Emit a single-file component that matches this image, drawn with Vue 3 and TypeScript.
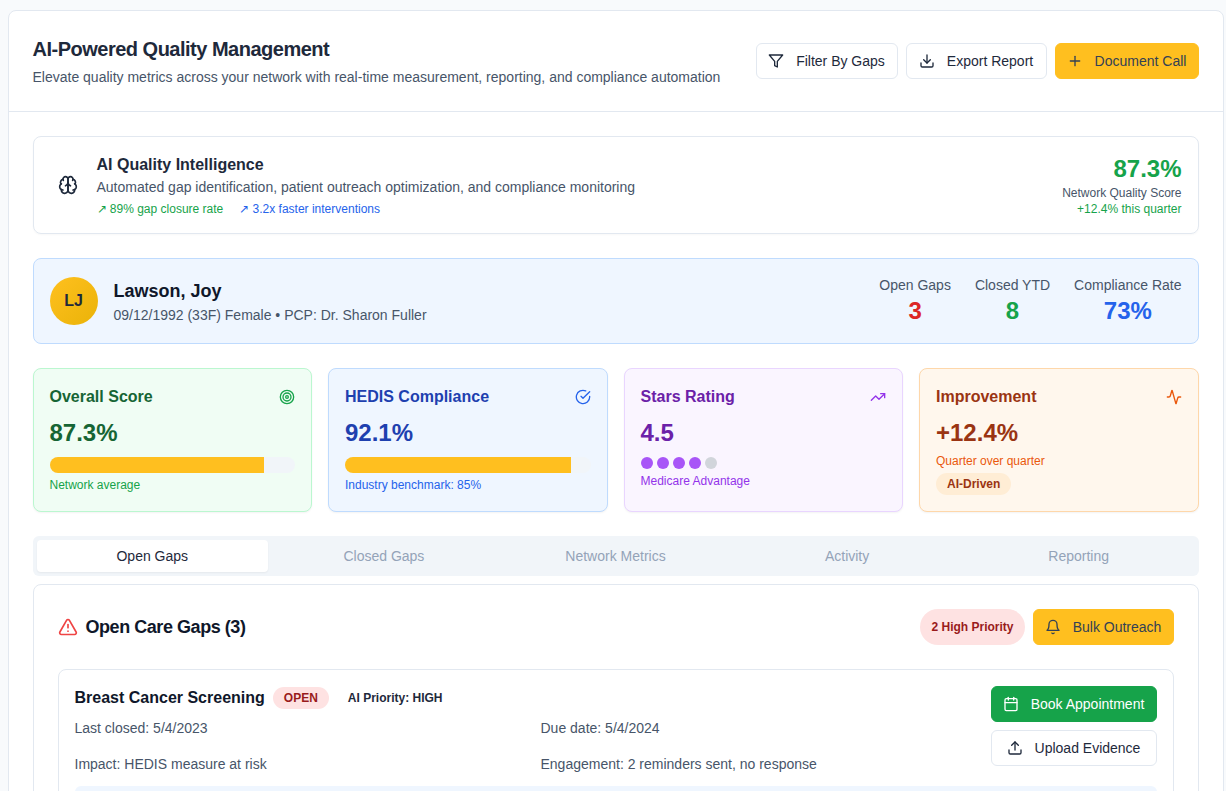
<script setup lang="ts">
const tabs = ['Open Gaps', 'Closed Gaps', 'Network Metrics', 'Activity', 'Reporting']
const stats = [
  { label: 'Open Gaps', value: '3', cls: 'red' },
  { label: 'Closed YTD', value: '8', cls: 'green' },
  { label: 'Compliance Rate', value: '73%', cls: 'blue' },
]
</script>

<template>
  <div class="page">
    <div class="shell">
      <header class="top">
        <div>
          <h1>AI-Powered Quality Management</h1>
          <p>Elevate quality metrics across your network with real-time measurement, reporting, and compliance automation</p>
        </div>
        <div class="actions">
          <button class="btn w-filter">
            <svg class="ico" viewBox="0 0 24 24"><polygon points="22 3 2 3 10 12.46 10 19 14 21 14 12.46 22 3" /></svg>
            Filter By Gaps
          </button>
          <button class="btn w-export">
            <svg class="ico" viewBox="0 0 24 24"><path d="M21 15v4a2 2 0 0 1-2 2H5a2 2 0 0 1-2-2v-4" /><polyline points="7 10 12 15 17 10" /><line x1="12" y1="15" x2="12" y2="3" /></svg>
            Export Report
          </button>
          <button class="btn yellow w-doc">
            <svg class="ico" viewBox="0 0 24 24"><path d="M5 12h14" /><path d="M12 5v14" /></svg>
            Document Call
          </button>
        </div>
      </header>

      <main class="body">
        <section class="intel">
          <svg class="ico brain" viewBox="0 0 24 24">
            <path d="M12 5a3 3 0 1 0-5.997.125 4 4 0 0 0-2.526 5.77 4 4 0 0 0 .556 6.588A4 4 0 1 0 12 18Z" />
            <path d="M12 5a3 3 0 1 1 5.997.125 4 4 0 0 1 2.526 5.77 4 4 0 0 1-.556 6.588A4 4 0 1 1 12 18Z" />
            <path d="M15 13a4.5 4.5 0 0 1-3-4 4.5 4.5 0 0 1-3 4" />
            <path d="M17.599 6.5a3 3 0 0 0 .399-1.375" />
            <path d="M6.003 5.125A3 3 0 0 0 6.401 6.5" />
            <path d="M3.477 10.896a4 4 0 0 1 .585-.396" />
            <path d="M19.938 10.5a4 4 0 0 1 .585.396" />
            <path d="M6 18a4 4 0 0 1-1.967-.516" />
            <path d="M19.967 17.484A4 4 0 0 1 18 18" />
          </svg>
          <div class="intel-text">
            <h3>AI Quality Intelligence</h3>
            <p>Automated gap identification, patient outreach optimization, and compliance monitoring</p>
            <div class="intel-meta">
              <span class="green">↗ 89% gap closure rate</span>
              <span class="blue">↗ 3.2x faster interventions</span>
            </div>
          </div>
          <div class="intel-score">
            <strong>87.3%</strong>
            <span>Network Quality Score</span>
            <em>+12.4% this quarter</em>
          </div>
        </section>

        <section class="patient">
          <div class="avatar">LJ</div>
          <div class="who">
            <h2>Lawson, Joy</h2>
            <p>09/12/1992 (33F) Female • PCP: Dr. Sharon Fuller</p>
          </div>
          <div class="stats">
            <div v-for="s in stats" :key="s.label" class="stat">
              <span>{{ s.label }}</span>
              <strong :class="s.cls">{{ s.value }}</strong>
            </div>
          </div>
        </section>

        <section class="metrics">
          <div class="metric m-green">
            <div class="m-head">
              <h4>Overall Score</h4>
              <svg class="ico m-ico" viewBox="0 0 24 24"><circle cx="12" cy="12" r="10" /><circle cx="12" cy="12" r="6" /><circle cx="12" cy="12" r="2" /></svg>
            </div>
            <div class="m-value">87.3%</div>
            <div class="track"><div class="fill" style="width: 87.3%"></div></div>
            <div class="m-note">Network average</div>
          </div>
          <div class="metric m-blue">
            <div class="m-head">
              <h4>HEDIS Compliance</h4>
              <svg class="ico m-ico" viewBox="0 0 24 24"><path d="M22 11.08V12a10 10 0 1 1-5.93-9.14" /><polyline points="22 4 12 14.01 9 11.01" /></svg>
            </div>
            <div class="m-value">92.1%</div>
            <div class="track"><div class="fill" style="width: 92.1%"></div></div>
            <div class="m-note">Industry benchmark: 85%</div>
          </div>
          <div class="metric m-purple">
            <div class="m-head">
              <h4>Stars Rating</h4>
              <svg class="ico m-ico" viewBox="0 0 24 24"><polyline points="22 7 13.5 15.5 8.5 10.5 2 17" /><polyline points="16 7 22 7 22 13" /></svg>
            </div>
            <div class="m-value">4.5</div>
            <div class="dots">
              <i v-for="n in 5" :key="n" :class="{ off: n === 5 }"></i>
            </div>
            <div class="m-note">Medicare Advantage</div>
          </div>
          <div class="metric m-orange">
            <div class="m-head">
              <h4>Improvement</h4>
              <svg class="ico m-ico" viewBox="0 0 24 24"><path d="M22 12h-2.48a2 2 0 0 0-1.93 1.46l-2.35 8.36a.25.25 0 0 1-.48 0L9.24 2.18a.25.25 0 0 0-.48 0l-2.35 8.36A2 2 0 0 1 4.49 12H2" /></svg>
            </div>
            <div class="m-value">+12.4%</div>
            <div class="m-note">Quarter over quarter</div>
            <span class="chip">AI-Driven</span>
          </div>
        </section>

        <nav class="tabs">
          <div v-for="(t, i) in tabs" :key="t" class="tab" :class="{ active: i === 0 }">{{ t }}</div>
        </nav>

        <section class="gaps">
          <div class="gaps-head">
            <div class="gaps-title">
              <svg class="ico alert" viewBox="0 0 24 24"><path d="m21.73 18-8-14a2 2 0 0 0-3.48 0l-8 14A2 2 0 0 0 4 21h16a2 2 0 0 0 1.73-3" /><path d="M12 9v4" /><path d="M12 17h.01" /></svg>
              <h3>Open Care Gaps (3)</h3>
            </div>
            <div class="gaps-actions">
              <span class="pill">2 High Priority</span>
              <button class="btn yellow w-bulk">
                <svg class="ico" viewBox="0 0 24 24"><path d="M6 8a6 6 0 0 1 12 0c0 7 3 9 3 9H3s3-2 3-9" /><path d="M10.3 21a1.94 1.94 0 0 0 3.4 0" /></svg>
                Bulk Outreach
              </button>
            </div>
          </div>

          <article class="gap">
            <div class="gap-row">
              <div class="gap-info">
                <div class="gap-title">
                  <h4>Breast Cancer Screening</h4>
                  <span class="open">OPEN</span>
                  <span class="prio">AI Priority: HIGH</span>
                </div>
                <div class="gap-grid">
                  <span>Last closed: 5/4/2023</span>
                  <span>Due date: 5/4/2024</span>
                  <span>Impact: HEDIS measure at risk</span>
                  <span>Engagement: 2 reminders sent, no response</span>
                </div>
              </div>
              <div class="gap-actions">
                <button class="btn solid-green">
                  <svg class="ico" viewBox="0 0 24 24"><path d="M8 2v4" /><path d="M16 2v4" /><rect x="3" y="4" width="18" height="18" rx="2" /><path d="M3 10h18" /></svg>
                  Book Appointment
                </button>
                <button class="btn">
                  <svg class="ico" viewBox="0 0 24 24"><path d="M21 15v4a2 2 0 0 1-2 2H5a2 2 0 0 1-2-2v-4" /><polyline points="17 8 12 3 7 8" /><line x1="12" y1="3" x2="12" y2="15" /></svg>
                  Upload Evidence
                </button>
              </div>
            </div>
            <div class="insight"></div>
          </article>
        </section>
      </main>
    </div>
  </div>
</template>

<style>
body {
  overflow: hidden;
  background: #f8fafc;
}
</style>

<style scoped>
.page {
  height: 791px;
  overflow: hidden;
  padding: 10px 2.5px 0 7.5px;
  box-sizing: border-box;
  font-family: "Liberation Sans", Arial, sans-serif;
  color: #1e293b;
  font-size: 14px;
  background: #f8fafc;
}

h1, h2, h3, h4, p {
  margin: 0;
}

.shell {
  background: #fff;
  border: 1px solid #e2e8f0;
  border-radius: 8px;
}

.top {
  display: flex;
  justify-content: space-between;
  align-items: center;
  padding: 24px;
  height: 101px;
  box-sizing: border-box;
  border-bottom: 1px solid #e2e8f0;
}

h1 {
  font-size: 20px;
  line-height: 28px;
  font-weight: 700;
  letter-spacing: -0.5px;
}

.top p {
  margin-top: 4px;
  line-height: 20px;
  color: #475569;
}

.actions {
  display: flex;
  gap: 8px;
}

.btn {
  display: inline-flex;
  align-items: center;
  justify-content: center;
  gap: 12px;
  height: 36px;
  padding: 0 8px;
  box-sizing: border-box;
  background: #fff;
  border: 1px solid #e2e8f0;
  border-radius: 6px;
  font: inherit;
  color: #1e293b;
  white-space: nowrap;
}

.w-filter { width: 142px; }
.w-export { width: 141px; }
.w-doc { width: 144px; }
.w-bulk { width: 141px; }

.btn.yellow {
  background: #ffbf1f;
  border-color: #ffbf1f;
  color: #334155;
}

.btn.solid-green {
  background: #16a34a;
  border-color: #16a34a;
  color: #fff;
}

.ico {
  width: 16px;
  height: 16px;
  flex: none;
  fill: none;
  stroke: currentColor;
  stroke-width: 2;
  stroke-linecap: round;
  stroke-linejoin: round;
}

.body {
  padding: 24px;
}

.intel {
  display: flex;
  align-items: center;
  height: 98px;
  box-sizing: border-box;
  padding: 0 16px 0 24px;
  border: 1px solid #e2e8f0;
  border-radius: 8px;
  box-shadow: 0 1px 2px rgba(0, 0, 0, 0.03);
}

.brain {
  width: 20px;
  height: 20px;
  margin-right: 19px;
}

.intel-text {
  flex: 1;
}

.intel-text h3 {
  font-size: 16px;
  line-height: 24px;
  font-weight: 700;
}

.intel-text p {
  line-height: 20px;
  color: #475569;
}

.intel-meta {
  display: flex;
  gap: 16px;
  margin-top: 4px;
  font-size: 12px;
  line-height: 16px;
}

.green { color: #16a34a; }
.blue { color: #2563eb; }
.red { color: #dc2626; }

.intel-score {
  display: flex;
  flex-direction: column;
  align-items: flex-end;
  font-size: 12px;
  line-height: 16px;
  color: #475569;
}

.intel-score strong {
  font-size: 24px;
  line-height: 32px;
  color: #16a34a;
}

.intel-score em {
  font-style: normal;
  color: #16a34a;
}

.patient {
  display: flex;
  align-items: center;
  gap: 16px;
  margin-top: 24px;
  height: 86px;
  box-sizing: border-box;
  padding: 0 16px;
  background: #eff6ff;
  border: 1px solid #bfdbfe;
  border-radius: 8px;
}

.avatar {
  display: flex;
  align-items: center;
  justify-content: center;
  width: 48px;
  height: 48px;
  border-radius: 50%;
  background: linear-gradient(135deg, #ffc01f, #eab308);
  font-size: 16px;
  font-weight: 700;
  color: #1e293b;
}

.who {
  flex: 1;
}

.who h2 {
  font-size: 18px;
  line-height: 28px;
  font-weight: 700;
  color: #0f172a;
}

.who p {
  line-height: 20px;
  color: #475569;
}

.stats {
  display: flex;
  gap: 24px;
}

.stat {
  display: flex;
  flex-direction: column;
  align-items: center;
  color: #475569;
  line-height: 20px;
}

.stat strong {
  font-size: 24px;
  line-height: 32px;
}

.metrics {
  display: grid;
  grid-template-columns: repeat(4, 1fr);
  gap: 16px;
  margin-top: 24px;
}

.metric {
  height: 144px;
  box-sizing: border-box;
  padding: 16px;
  border: 1px solid;
  border-radius: 8px;
  box-shadow: 0 1px 2px rgba(0, 0, 0, 0.05);
}

.m-head {
  display: flex;
  justify-content: space-between;
  align-items: center;
  height: 24px;
}

.m-head h4 {
  font-size: 16px;
  font-weight: 700;
}

.m-value {
  margin-top: 8px;
  font-size: 24px;
  line-height: 32px;
  font-weight: 700;
}

.track {
  margin-top: 8px;
  height: 16px;
  border-radius: 999px;
  background: #f1f5f9;
  overflow: hidden;
}

.fill {
  height: 100%;
  background: #ffbf1f;
}

.m-note {
  margin-top: 4px;
  font-size: 12px;
  line-height: 16px;
}

.m-green { background: #f0fdf4; border-color: #bbf7d0; }
.m-green h4, .m-green .m-value { color: #166534; }
.m-green .m-ico, .m-green .m-note { color: #16a34a; }

.m-blue { background: #eff6ff; border-color: #bfdbfe; }
.m-blue h4, .m-blue .m-value { color: #1e40af; }
.m-blue .m-ico, .m-blue .m-note { color: #2563eb; }

.m-purple { background: #faf5ff; border-color: #e9d5ff; }
.m-purple h4, .m-purple .m-value { color: #6b21a8; }
.m-purple .m-ico, .m-purple .m-note { color: #9333ea; }

.m-orange { background: #fff7ed; border-color: #fed7aa; }
.m-orange h4, .m-orange .m-value { color: #9a3412; }
.m-orange .m-ico, .m-orange .m-note { color: #ea580c; }

.dots {
  display: flex;
  gap: 4px;
  margin-top: 8px;
  height: 12px;
}

.dots i {
  width: 12px;
  height: 12px;
  border-radius: 50%;
  background: #a855f7;
}

.dots i.off {
  background: #d1d5db;
}

.chip {
  display: inline-block;
  margin-top: 4px;
  padding: 3px 11px;
  border-radius: 999px;
  background: #ffedd5;
  color: #9a3412;
  font-size: 12px;
  line-height: 16px;
  font-weight: 700;
}

.tabs {
  display: grid;
  grid-template-columns: repeat(5, 1fr);
  height: 40px;
  box-sizing: border-box;
  margin-top: 24px;
  padding: 4px;
  background: #f1f5f9;
  border-radius: 6px;
}

.tab {
  display: flex;
  align-items: center;
  justify-content: center;
  border-radius: 4px;
  color: #94a3b8;
}

.tab.active {
  background: #fff;
  color: #1e293b;
  box-shadow: 0 1px 2px rgba(0, 0, 0, 0.05);
}

.gaps {
  margin-top: 8px;
  padding: 24px;
  border: 1px solid #e2e8f0;
  border-radius: 8px;
}

.gaps-head {
  display: flex;
  justify-content: space-between;
  align-items: center;
}

.gaps-title {
  display: flex;
  align-items: center;
  gap: 8px;
}

.alert {
  width: 20px;
  height: 20px;
  color: #ef4444;
}

.gaps-title h3 {
  font-size: 18px;
  line-height: 28px;
  font-weight: 700;
  letter-spacing: -0.45px;
  color: #0f172a;
}

.gaps-actions {
  display: flex;
  align-items: center;
  gap: 8px;
}

.pill {
  display: flex;
  align-items: center;
  height: 36px;
  padding: 0 11px;
  border-radius: 999px;
  background: #fee2e2;
  color: #991b1b;
  font-size: 12px;
  font-weight: 700;
}

.gap {
  margin-top: 24px;
  padding: 16px;
  border: 1px solid #e2e8f0;
  border-radius: 8px;
}

.gap-row {
  display: flex;
  gap: 16px;
}

.gap-info {
  flex: 1;
}

.gap-title {
  display: flex;
  align-items: center;
  gap: 8px;
  height: 24px;
}

.gap-title h4 {
  font-size: 16px;
  font-weight: 700;
  color: #0f172a;
}

.open {
  padding: 3px 11px;
  border-radius: 999px;
  background: #fee2e2;
  color: #991b1b;
  font-size: 12px;
  line-height: 16px;
  font-weight: 700;
}

.prio {
  padding: 3px 11px;
  font-size: 12px;
  line-height: 16px;
  font-weight: 700;
  color: #1e293b;
}

.gap-grid {
  display: grid;
  grid-template-columns: 1fr 1fr;
  row-gap: 16px;
  column-gap: 32px;
  margin-top: 8px;
  line-height: 20px;
  color: #475569;
}

.gap-actions {
  display: flex;
  flex-direction: column;
  gap: 8px;
  width: 166px;
}

.insight {
  margin-top: 12px;
  height: 60px;
  border-radius: 6px;
  background: #eff6ff;
}
</style>
